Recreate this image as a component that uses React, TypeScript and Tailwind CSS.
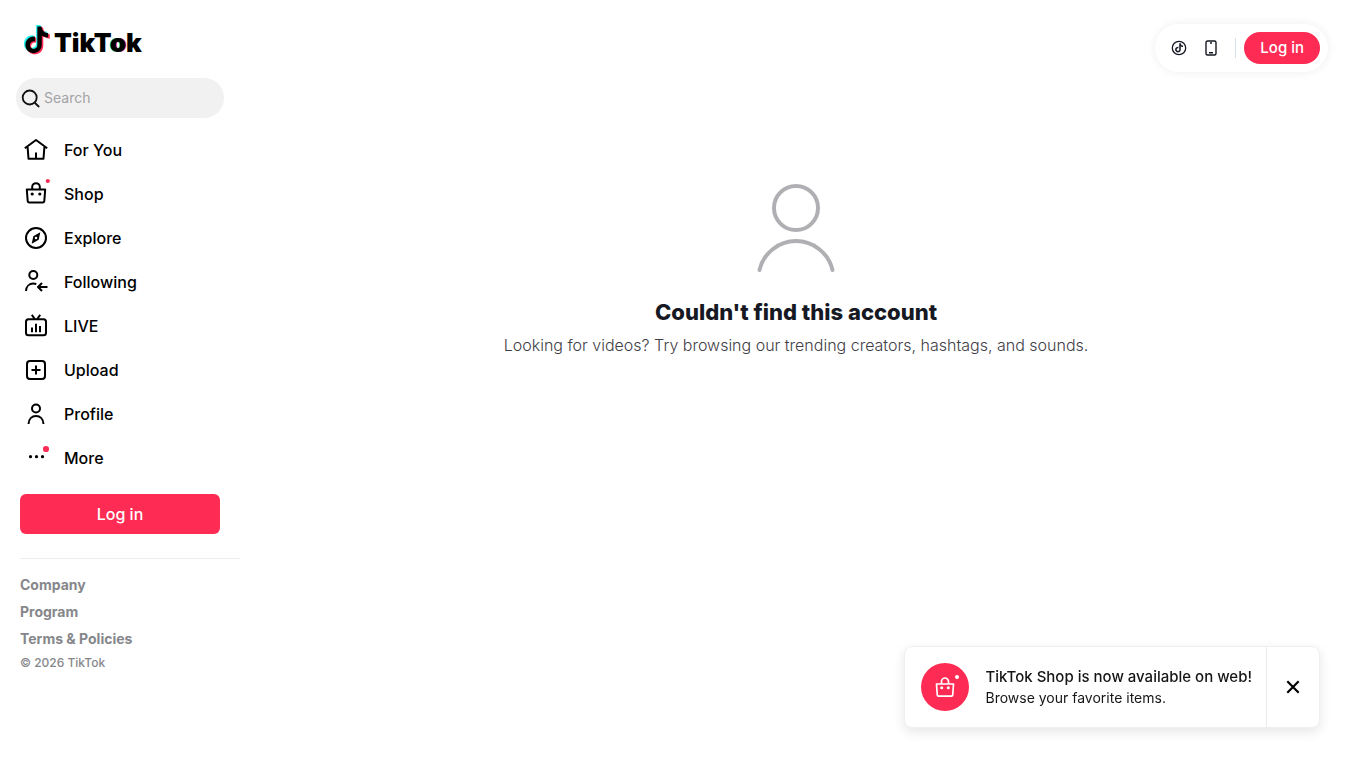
import type { ReactNode } from "react";

const NOTE_PATH =
  "M12.525.02c1.31-.02 2.61-.01 3.91-.02.08 1.53.63 3.09 1.75 4.17 1.12 1.11 2.7 1.62 4.24 1.79v4.03c-1.44-.05-2.89-.35-4.2-.97-.57-.26-1.1-.59-1.62-.93-.01 2.92.01 5.84-.02 8.75-.08 1.4-.54 2.79-1.35 3.94-1.31 1.92-3.58 3.17-5.91 3.21-1.43.08-2.86-.31-4.08-1.03-2.02-1.19-3.44-3.37-3.65-5.71-.02-.5-.03-1-.01-1.49.18-1.9 1.12-3.72 2.58-4.96 1.66-1.44 3.98-2.13 6.15-1.72.02 1.48-.04 2.96-.04 4.44-.99-.32-2.15-.23-3.02.37-.63.41-1.11 1.04-1.36 1.75-.21.51-.15 1.07-.14 1.61.24 1.64 1.82 3.02 3.5 2.87 1.12-.01 2.19-.66 2.77-1.61.19-.33.4-.67.41-1.06.1-1.79.06-3.57.07-5.36.01-4.03-.01-8.05.02-12.07z";

const NavIcon = ({ children }: { children: ReactNode }) => (
  <svg
    viewBox="0 0 24 24"
    className="h-6 w-6 shrink-0 overflow-visible"
    fill="none"
    stroke="currentColor"
    strokeWidth="2"
    strokeLinejoin="round"
    aria-hidden="true"
  >
    {children}
  </svg>
);

const navItems = [
  {
    label: "For You",
    icon: (
      <NavIcon>
        <path d="M.8 10.300 12 2l11.200 8.300M3.600 9l.9 11.700h15L20.400 9M12 14.500v6" />
      </NavIcon>
    ),
  },
  {
    label: "Shop",
    icon: (
      <NavIcon>
        <path d="M2.800 7.500h18.400l-.9 11.700a1.300 1.300 0 0 1-1.300 1.200H5a1.300 1.300 0 0 1-1.300-1.200z" />
        <path d="M8.200 7.500V5a3.800 3.800 0 0 1 7.600 0v2.500" />
        <circle cx="8.200" cy="12" r="1.600" fill="currentColor" stroke="none" />
        <circle cx="15.800" cy="12" r="1.600" fill="currentColor" stroke="none" />
        <circle cx="23.800" cy="-1" r="2.100" fill="#fe2c55" stroke="none" />
      </NavIcon>
    ),
  },
  {
    label: "Explore",
    icon: (
      <NavIcon>
        <circle cx="12" cy="12" r="10" />
        <path
          d="M16.300 6.300 9.300 10.200 7.700 17.700l7-3.900zM12 10.700a1.300 1.300 0 1 1 0 2.600 1.300 1.300 0 0 1 0-2.600z"
          fill="currentColor"
          fillRule="evenodd"
          stroke="none"
        />
      </NavIcon>
    ),
  },
  {
    label: "Following",
    icon: (
      <NavIcon>
        <circle cx="9.300" cy="5" r="4" />
        <path d="M2 21c.2-4.500 3.300-7.400 7.300-7.400 1.100 0 2.100.2 3 .6M23.500 17h-9M18 13l-4 4 4 4" />
      </NavIcon>
    ),
  },
  {
    label: "LIVE",
    icon: (
      <NavIcon>
        <rect x="2" y="5.300" width="20" height="16" rx="2.500" />
        <path d="M7.800.8 10.800 5M16.200.8 13.200 5M8 13.500v4.800M12 9.800v8.500M16 12v6.300" />
      </NavIcon>
    ),
  },
  {
    label: "Upload",
    icon: (
      <NavIcon>
        <rect x="3" y="3" width="18" height="18" rx="3" />
        <path d="M12 7.500v9M7.500 12h9" />
      </NavIcon>
    ),
  },
  {
    label: "Profile",
    icon: (
      <NavIcon>
        <circle cx="12" cy="6.500" r="4" />
        <path d="M4.500 22c.2-4.900 3.300-8 7.500-8s7.300 3.100 7.500 8" />
      </NavIcon>
    ),
  },
  {
    label: "More",
    icon: (
      <NavIcon>
        <g fill="currentColor" stroke="none">
          <circle cx="6.500" cy="10.700" r="1.600" />
          <circle cx="12.500" cy="10.700" r="1.600" />
          <circle cx="18.500" cy="10.700" r="1.600" />
          <circle cx="22" cy="3" r="3.100" fill="#fe2c55" />
        </g>
      </NavIcon>
    ),
  },
];

const footerLinks = ["Company", "Program", "Terms & Policies"];

const Logo = () => (
  <a href="#" aria-label="TikTok" className="flex items-center gap-1 text-black">
    <svg viewBox="0 0 26 32" className="h-8 w-[26px] shrink-0" aria-hidden="true">
      <path d={NOTE_PATH} fill="#25f4ee" transform="translate(-1.900 1.100) scale(1.120)" />
      <path d={NOTE_PATH} fill="#fe2c55" transform="translate(.7 3.500) scale(1.120)" />
      <path d={NOTE_PATH} fill="#000" transform="translate(-.3 2.500) scale(1.090 1.110)" />
    </svg>
    <span className="pt-[6px] text-[26px] leading-8 font-black">
      TikT
      <span className="[text-shadow:-1px_0_#25f4ee,1px_0_#fe2c55]">o</span>k
    </span>
  </a>
);

const Sidebar = () => (
  <aside className="w-60 shrink-0">
    <div className="px-6 pt-[21px] pb-[19px]">
      <Logo />
    </div>

    <form className="mx-4 flex h-10 items-center rounded-full bg-[#f1f1f1] pr-4 pl-1" role="search">
      <svg
        viewBox="0 0 24 24"
        className="h-6 w-6 shrink-0"
        fill="none"
        stroke="#111"
        strokeWidth="1.800"
        strokeLinecap="round"
        aria-hidden="true"
      >
        <circle cx="9.700" cy="11.500" r="7" />
        <path d="m15 17 3.700 3.500" />
      </svg>
      <input
        type="search"
        aria-label="Search"
        placeholder="Search"
        className="w-full min-w-0 bg-transparent text-sm outline-none placeholder:text-[#a3a3a6]"
      />
    </form>

    <nav className="mt-[10px] px-6">
      <ul>
        {navItems.map((item) => (
          <li key={item.label}>
            <a href="#" className="flex h-11 items-center gap-4 text-base font-medium text-black">
              {item.icon}
              {item.label}
            </a>
          </li>
        ))}
      </ul>
    </nav>

    <div className="mt-[14px] px-5">
      <button type="button" className="h-10 w-full rounded-md bg-[#fe2c55] text-base font-medium text-white">
        Log in
      </button>
    </div>

    <footer className="mt-6 ml-5 border-t border-[#ececed] pt-3 text-[#86878b]">
      <ul>
        {footerLinks.map((label) => (
          <li key={label}>
            <a href="#" className="block text-sm leading-[27px] font-bold">
              {label}
            </a>
          </li>
        ))}
      </ul>
      <p className="text-xs leading-[22px] font-medium">© 2026 TikTok</p>
    </footer>
  </aside>
);

const TopActions = () => (
  <div className="fixed top-6 right-6 flex h-12 items-center rounded-full bg-white px-2 shadow-[0_0_10px_rgba(0,0,0,0.07)]">
    <button type="button" aria-label="Get coins" className="flex h-8 w-8 items-center justify-center">
      <svg viewBox="0 0 16 16" className="h-4 w-4" aria-hidden="true">
        <circle cx="8" cy="8" r="6.700" fill="none" stroke="#161823" strokeWidth="1.300" />
        <path d={NOTE_PATH} fill="#161823" transform="translate(3.500 3.300) scale(.38)" />
      </svg>
    </button>
    <button type="button" aria-label="Get app" className="flex h-8 w-8 items-center justify-center">
      <svg
        viewBox="0 0 16 16"
        className="h-4 w-4"
        fill="none"
        stroke="#161823"
        strokeWidth="1.400"
        aria-hidden="true"
      >
        <rect x="3" y="1" width="10" height="14" rx="1.500" />
        <path d="M7 3h2M6 12.700h4" />
      </svg>
    </button>
    <span className="mx-2 h-5 w-px bg-[#d5e3e6]" />
    <button type="button" className="h-8 rounded-full bg-[#fe2c55] px-4 text-[15px] font-medium text-white">
      Log in
    </button>
  </div>
);

const ShopToast = () => (
  <div
    role="status"
    className="fixed right-8 bottom-8 flex rounded-lg border border-[#efefef] bg-white shadow-[0_4px_12px_rgba(0,0,0,0.1)]"
  >
    <div className="flex items-center gap-4 py-4 pr-[14px] pl-4">
      <span className="flex h-12 w-12 items-center justify-center rounded-full bg-[#fe2c55] text-white">
        <svg
          viewBox="0 0 24 24"
          className="h-6 w-6 overflow-visible"
          fill="none"
          stroke="currentColor"
          strokeWidth="1.700"
          strokeLinejoin="round"
          aria-hidden="true"
        >
          <path d="M3.500 9h17l-.8 11.200a1 1 0 0 1-1 .9H5.300a1 1 0 0 1-1-.9z" />
          <path d="M8.500 9V6.500a3.500 3.500 0 0 1 7 0V9" />
          <circle cx="8.700" cy="12.800" r="1.500" fill="currentColor" stroke="none" />
          <circle cx="15.300" cy="12.800" r="1.500" fill="currentColor" stroke="none" />
          <circle cx="24" cy="2" r="2" fill="currentColor" stroke="none" />
        </svg>
      </span>
      <div className="text-[#161616]">
        <p className="text-[15px] leading-[22px] font-medium">TikTok Shop is now available on web!</p>
        <p className="text-sm leading-5">Browse your favorite items.</p>
      </div>
    </div>
    <button
      type="button"
      aria-label="Close"
      className="flex w-[53px] items-center justify-center border-l border-[#ececec]"
    >
      <svg viewBox="0 0 14 14" className="h-[14px] w-[14px]" stroke="#000" strokeWidth="2.200" aria-hidden="true">
        <path d="m1.300 1.300 11.400 11.400M12.700 1.300 1.300 12.700" />
      </svg>
    </button>
  </div>
);

const App = () => {
  return (
    <div className="flex min-h-screen bg-white font-['Inter','Liberation_Sans',sans-serif]">
      <Sidebar />

      <main className="flex flex-1 flex-col items-center px-6 pt-[182px] text-center">
        <svg
          viewBox="0 0 90 90"
          className="h-[90px] w-[90px]"
          fill="none"
          stroke="#b0b0b4"
          strokeWidth="4"
          strokeLinecap="round"
          aria-hidden="true"
        >
          <circle cx="45" cy="26" r="22" />
          <path d="M8.500 88a37.500 37.500 0 0 1 73 0" />
        </svg>
        <h1 className="mt-6 text-[22px] leading-8 font-extrabold text-[#161823]">Couldn't find this account</h1>
        <p className="mt-1 text-base leading-[26px] font-light text-[#3f4047]">
          Looking for videos? Try browsing our trending creators, hashtags, and sounds.
        </p>
      </main>

      <TopActions />
      <ShopToast />
    </div>
  );
};

export default App;
